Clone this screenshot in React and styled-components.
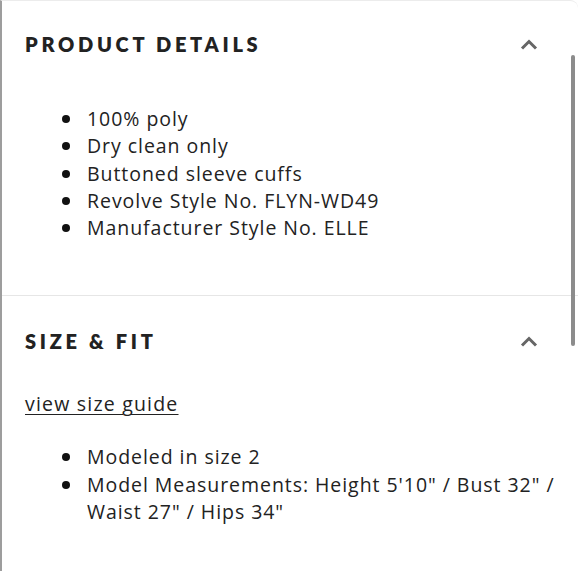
import React from "react";
import styled, { createGlobalStyle } from "styled-components";

const Global = createGlobalStyle`
  html, body { margin: 0; padding: 0; background: #fff; }
  body { font-family: "Open Sans", "Liberation Sans", sans-serif; color: #222; }
`;

const Panel = styled.div`
  position: relative;
  box-sizing: border-box;
  width: 578px;
  height: 571px;
  border-left: 2px solid #9d9d9d;
  border-top: 1px solid #ececec;
  border-top-right-radius: 8px;
  overflow: hidden;
`;

const Section = styled.section`
  padding: ${(p) => p.$top}px 0 ${(p) => p.$bottom}px 0;
  border-bottom: ${(p) => (p.$divider ? "1px solid #e6e6e6" : "none")};
`;

const Header = styled.div`
  display: flex;
  align-items: center;
  justify-content: space-between;
  padding: 0 40px 0 23px;
  height: 24px;
`;

const Title = styled.h2`
  margin: 0;
  font-family: Lato, "Liberation Sans", sans-serif;
  font-weight: 800;
  font-size: 20px;
  letter-spacing: 3.7px;
  color: #222;
  line-height: 24px;
`;

const Chevron = styled.svg`
  width: 18px;
  height: 11px;
  display: block;
`;

const List = styled.ul`
  list-style: none;
  margin: ${(p) => p.$top}px 0 0 0;
  padding: 0 14px 0 60px;
`;

const Item = styled.li`
  display: flex;
  align-items: flex-start;
  font-size: 19.5px;
  letter-spacing: 0.95px;
  line-height: 27.3px;
  color: #222;
`;

const Dot = styled.span`
  flex: 0 0 auto;
  width: 8px;
  height: 8px;
  border-radius: 50%;
  background: #111;
  margin: 10px 17px 0 0;
`;

const Guide = styled.a`
  display: block;
  width: max-content;
  margin: ${(p) => p.$top}px 0 0 23px;
  font-size: 19.5px;
  letter-spacing: 1.2px;
  line-height: 27px;
  color: #222;
  text-decoration: underline;
  text-underline-offset: 3px;
  text-decoration-thickness: 1px;
`;

const Scrollbar = styled.div`
  position: absolute;
  right: 3px;
  top: 54px;
  width: 4px;
  height: 291px;
  border-radius: 2px;
  background: #8c8c8c;
`;

const Up = () => (
  <Chevron viewBox="0 0 18 11">
    <polyline points="2,9.5 9,2.5 16,9.5" fill="none" stroke="#666" strokeWidth="3" />
  </Chevron>
);

const details = [
  "100% poly",
  "Dry clean only",
  "Buttoned sleeve cuffs",
  "Revolve Style No. FLYN-WD49",
  "Manufacturer Style No. ELLE",
];

const fit = [
  "Modeled in size 2",
  'Model Measurements: Height 5\'10" / Bust 32" / Waist 27" / Hips 34"',
];

export default function App() {
  return (
    <>
      <Global />
      <Panel>
        <Section $top={31} $bottom={54} $divider>
          <Header>
            <Title>PRODUCT DETAILS</Title>
            <Up />
          </Header>
          <List $top={49}>
            {details.map((d) => (
              <Item key={d}>
                <Dot />
                <span>{d}</span>
              </Item>
            ))}
          </List>
        </Section>
        <Section $top={33} $bottom={0}>
          <Header>
            <Title>SIZE &amp; FIT</Title>
            <Up />
          </Header>
          <Guide href="#" $top={37}>view size guide</Guide>
          <List $top={26}>
            {fit.map((d) => (
              <Item key={d}>
                <Dot />
                <span>{d}</span>
              </Item>
            ))}
          </List>
        </Section>
        <Scrollbar />
      </Panel>
    </>
  );
}
